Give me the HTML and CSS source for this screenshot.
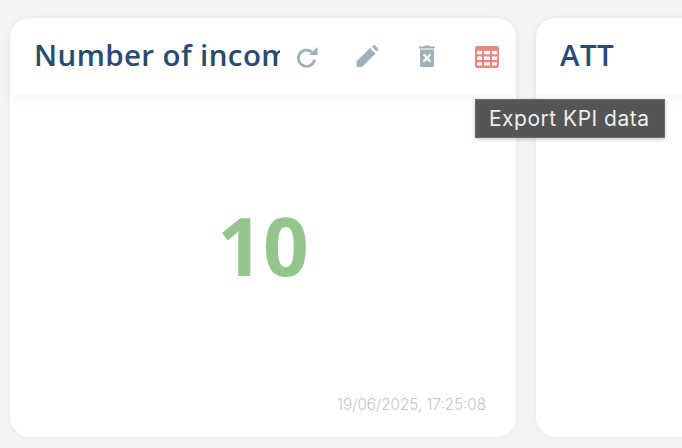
FILE: index.html
```html
<!DOCTYPE html>
<html>
<head>
    <title>KPI dashboard</title>
    <link rel="stylesheet" href="styles.css">
</head>
<body>
    <div class="board">
        <div class="kpi-card">
            <div class="kpi-header">
                <div class="kpi-title">Number of incom</div>
                <div class="kpi-actions">
                    <span class="kpi-action">
                        <svg width="24" height="24" viewBox="0 0 24 24"><path d="M17 8.2 A8.1 8.1 0 1 0 19.6 15.5" fill="none" stroke="#9fb0b8" stroke-width="2.8"/><path d="M14 11 H22.5 V3 Z" fill="#9fb0b8"/></svg>
                    </span>
                    <span class="kpi-action">
                        <svg width="24" height="24" viewBox="0 0 24 24"><path d="M1.5 23 V17.5 L15 4 L20.5 9.5 L7 23 Z M16.8 2.6 L18 1.4 Q19 0.6 20 1.4 L22.8 4.2 Q23.6 5.2 22.8 6.2 L21.6 7.4 Z" fill="#9fb0b8"/></svg>
                    </span>
                    <span class="kpi-action">
                        <svg width="24" height="24" viewBox="0 0 24 24"><path fill-rule="evenodd" d="M4 2.5 H9 L9.8 1.5 H14.2 L15 2.5 H20 V4.5 H4 Z M5 5.5 H19 V21.5 Q19 23 17.5 23 H6.5 Q5 23 5 21.5 Z M9.2 9.6 L7.8 11 L10.4 14 L7.8 17 L9.2 18.4 L12 15.8 L14.8 18.4 L16.2 17 L13.6 14 L16.2 11 L14.8 9.6 L12 12.2 Z" fill="#9fb0b8"/></svg>
                    </span>
                    <span class="kpi-action">
                        <svg width="24" height="24" viewBox="0 0 24 24"><path fill-rule="evenodd" d="M2 2 H22 Q24 2 24 4 V22 Q24 24 22 24 H2 Q0 24 0 22 V4 Q0 2 2 2 Z M2 7 V10.3 H7 V7 Z M9 7 V10.3 H15 V7 Z M17 7 V10.3 H22 V7 Z M2 12.6 V15.9 H7 V12.6 Z M9 12.6 V15.9 H15 V12.6 Z M17 12.6 V15.9 H22 V12.6 Z M2 18.2 V21.6 H7 V18.2 Z M9 18.2 V21.6 H15 V18.2 Z M17 18.2 V21.6 H22 V18.2 Z" fill="#f0857d"/></svg>
                    </span>
                </div>
            </div>
            <div class="kpi-body">
                <div class="kpi-value">10</div>
                <div class="kpi-date">19/06/2025, 17:25:08</div>
            </div>
            <div class="tooltip">Export KPI data</div>
        </div>
        <div class="kpi-card">
            <div class="kpi-header">
                <div class="kpi-title">ATT</div>
            </div>
        </div>
    </div>
</body>
</html>
```

FILE: styles.css
```css
* {
    margin: 0;
    padding: 0;
    box-sizing: border-box;
    font-family: "Open Sans", Arial, sans-serif;
}

html, body {
    height: 100%;
    overflow: hidden;
}

body {
    background: #f4f4f4;
}

.board {
    display: flex;
    gap: 20px;
    padding: 18px 10px 11px;
    height: 100%;
}

.kpi-card {
    position: relative;
    display: flex;
    flex-direction: column;
    flex-shrink: 0;
    width: 506px;
    background: white;
    border-radius: 20px;
    box-shadow: 0 0 6px rgba(0, 0, 0, 0.05);
}

.kpi-header {
    display: flex;
    align-items: center;
    gap: 15px;
    height: 76px;
    padding: 0 17px 4px 24px;
    border-radius: 20px 20px 0 0;
    box-shadow: 0 4px 12px rgba(0, 0, 0, 0.03);
}

.kpi-title {
    flex: 1;
    min-width: 0;
    overflow: hidden;
    white-space: nowrap;
    font-size: 29.5px;
    font-weight: 550;
    letter-spacing: 0.4px;
    color: #2a4a72;
}

.kpi-actions {
    display: flex;
    gap: 36px;
    margin-top: 4px;
}

.kpi-action {
    display: flex;
    width: 24px;
    height: 24px;
}

.kpi-body {
    flex: 1;
    display: flex;
    flex-direction: column;
    padding: 0 30px 23px;
}

.kpi-value {
    flex: 1;
    display: flex;
    align-items: center;
    justify-content: center;
    font-size: 80px;
    font-weight: 700;
    color: #93c58d;
}

.kpi-date {
    text-align: right;
    font-family: Inter, sans-serif;
    font-size: 15.2px;
    font-weight: 300;
    color: #c4c4c4;
}

.tooltip {
    position: absolute;
    left: 465px;
    top: 81px;
    padding: 6px 14px 6px 13px;
    background: #555;
    border: 1px solid #6b6b6b;
    box-shadow: 0 1px 4px rgba(0, 0, 0, 0.25);
    white-space: nowrap;
    font-family: Inter, sans-serif;
    font-size: 21px;
    letter-spacing: 0.5px;
    color: #eee;
    z-index: 2;
}
```
